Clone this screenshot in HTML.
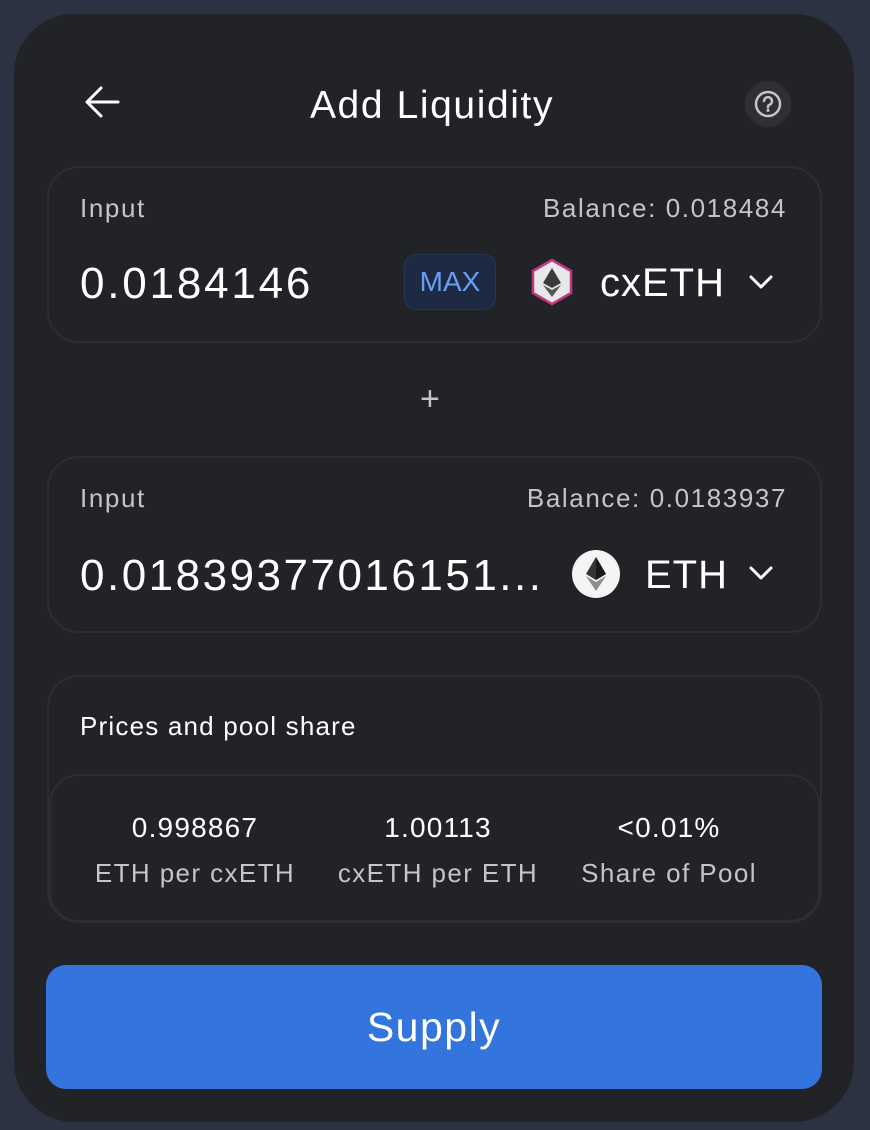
<!DOCTYPE html>
<html><head><style>
*{margin:0;padding:0;box-sizing:border-box}
body{width:870px;height:1130px;background:#2c3241;font-family:"Liberation Sans",sans-serif;color:#fff;position:relative;overflow:hidden}
.card{position:absolute;left:14px;top:14px;width:840px;height:1108px;background:#222327;border-radius:60px}
.abs{position:absolute}
.box{position:absolute;left:47px;width:775px;border:2px solid #2c2e33;border-radius:32px}
.lbl{font-size:26px;color:#c3c5cb;letter-spacing:1.6px}
.big{font-size:44px;color:#fff;letter-spacing:2.8px}
.tok{font-size:40px;letter-spacing:1px}
.v{font-size:28px;letter-spacing:1.2px}
.s{font-size:26px;color:#c3c5cb;letter-spacing:1.4px}
</style></head><body>
<div class="card"></div>
<svg class="abs" style="left:84px;top:84px" width="38" height="36" viewBox="0 0 38 36"><path d="M34 18H4M17 4L3 18l14 14" stroke="#fff" stroke-width="3" fill="none" stroke-linecap="round" stroke-linejoin="round"/></svg>
<div class="abs" style="left:0;width:864px;top:84px;text-align:center;font-size:39px;letter-spacing:1.6px">Add Liquidity</div>
<div class="abs" style="left:745px;top:81px;width:46px;height:46px;border-radius:50%;background:#2e3035"></div>
<svg class="abs" style="left:753px;top:89px" width="30" height="30" viewBox="0 0 30 30"><circle cx="15" cy="15" r="12" stroke="#c3c5cb" stroke-width="2.5" fill="none"/><path d="M11 12a4 4 0 1 1 5 4c-1 .5-1 1-1 2.5" stroke="#c3c5cb" stroke-width="2.5" fill="none" stroke-linecap="round"/><circle cx="15" cy="21.5" r="1.5" fill="#c3c5cb"/></svg>

<div class="box" style="top:166px;height:177px"></div>
<div class="abs lbl" style="left:80px;top:193px">Input</div>
<div class="abs lbl" style="right:83px;top:193px">Balance: 0.018484</div>
<div class="abs big" style="left:80px;top:259px">0.0184146</div>
<div class="abs" style="left:404px;top:254px;width:92px;height:56px;border-radius:12px;background:#1e2a44;border:1px solid #24375a;color:#6b9df2;font-size:28px;text-align:center;line-height:54px">MAX</div>
<svg class="abs" style="left:529px;top:258px" width="46" height="48" viewBox="0 0 46 48"><polygon points="23,2 42,13 42,35 23,46 4,35 4,13" fill="#e8e8ea" stroke="#c0397f" stroke-width="2.5"/><polygon points="23,10 14,25 23,30 32,25" fill="#3a3a3a"/><polygon points="23,32 14,27 23,39 32,27" fill="#555"/></svg>
<div class="abs tok" style="left:600px;top:261px">cxETH</div>
<svg class="abs" style="left:748px;top:274px" width="26" height="16" viewBox="0 0 26 16"><path d="M3 3l10 10L23 3" stroke="#fff" stroke-width="3" fill="none" stroke-linecap="round" stroke-linejoin="round"/></svg>

<div class="abs" style="left:420px;top:380px;font-size:34px;color:#c3c5cb">+</div>

<div class="box" style="top:456px;height:177px"></div>
<div class="abs lbl" style="left:80px;top:483px">Input</div>
<div class="abs lbl" style="right:83px;top:483px">Balance: 0.0183937</div>
<div class="abs big" style="left:80px;top:551px;letter-spacing:2.5px">0.01839377016151...</div>
<svg class="abs" style="left:572px;top:550px" width="48" height="48" viewBox="0 0 48 48"><circle cx="24" cy="24" r="24" fill="#f4f4f4"/><polygon points="24,7 14,24 24,30 34,24" fill="#343434"/><polygon points="24,7 24,30 34,24" fill="#1a1a1a"/><polygon points="24,32 14,26 24,41 34,26" fill="#8c8c8c"/></svg>
<div class="abs tok" style="left:645px;top:553px">ETH</div>
<svg class="abs" style="left:748px;top:565px" width="26" height="16" viewBox="0 0 26 16"><path d="M3 3l10 10L23 3" stroke="#fff" stroke-width="3" fill="none" stroke-linecap="round" stroke-linejoin="round"/></svg>

<div class="box" style="top:675px;height:248px"></div>
<div class="abs" style="left:80px;top:711px;font-size:26px;letter-spacing:1.2px">Prices and pool share</div>
<div class="box" style="top:774px;left:49px;width:771px;height:148px;border-radius:30px"></div>
<div class="abs v" style="left:80px;width:230px;top:812px;text-align:center">0.998867</div>
<div class="abs s" style="left:80px;width:230px;top:858px;text-align:center">ETH per cxETH</div>
<div class="abs v" style="left:323px;width:230px;top:812px;text-align:center">1.00113</div>
<div class="abs s" style="left:323px;width:230px;top:858px;text-align:center">cxETH per ETH</div>
<div class="abs v" style="left:554px;width:230px;top:812px;text-align:center">&lt;0.01%</div>
<div class="abs s" style="left:554px;width:230px;top:858px;text-align:center">Share of Pool</div>

<div class="abs" style="left:46px;top:965px;width:776px;height:124px;border-radius:20px;background:#3474dd;text-align:center;line-height:124px;font-size:41px;letter-spacing:1.5px">Supply</div>
</body></html>
